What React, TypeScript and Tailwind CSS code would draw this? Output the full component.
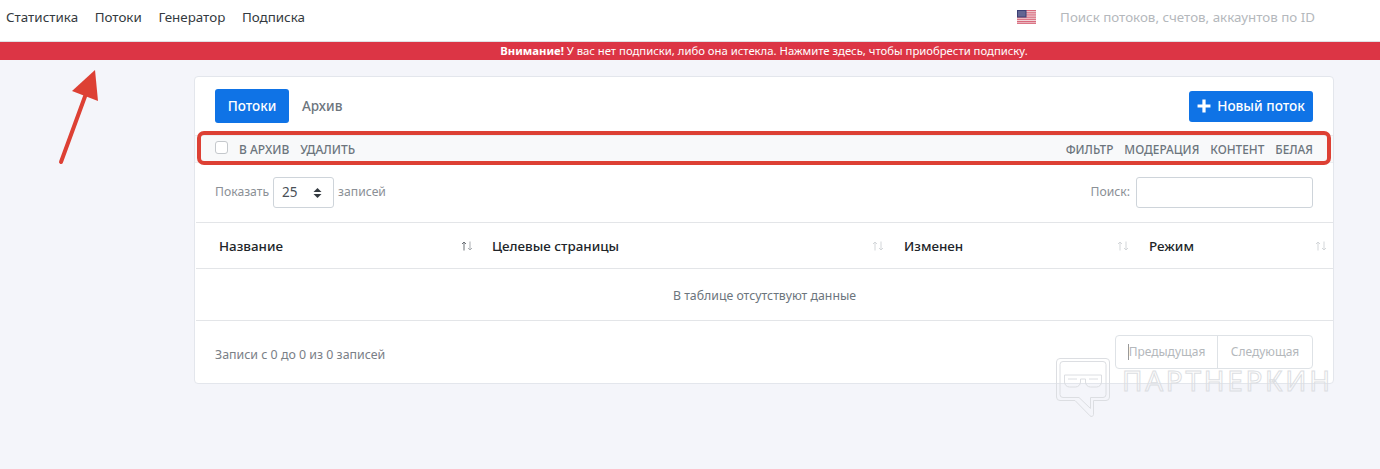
const font = "font-['Noto_Sans','Open_Sans',sans-serif]";

function SortIcon({ up = false }: { up?: boolean }) {
  return (
    <svg width="12" height="10" viewBox="0 0 12 10" className="shrink-0" fill="none" strokeWidth="1">
      <g stroke={up ? "#6b7076" : "#d3d6d9"}>
        <path d="M3 9.500V1M1 3l2-2 2 2" />
      </g>
      <g stroke={up ? "#a9adb1" : "#d3d6d9"}>
        <path d="M9 .5V9M7 7l2 2 2-2" />
      </g>
    </svg>
  );
}

function Flag() {
  return (
    <svg width="19" height="14" viewBox="0 0 19 14" className="shrink-0">
      <rect width="19" height="14" fill="#f5f0f0" />
      {[0, 2.2, 4.3, 6.5, 8.6, 10.8, 12.6].map((y) => (
        <rect key={y} y={y} width="19" height="1.3" fill="#d9697c" />
      ))}
      <rect width="9.5" height="7.5" fill="#3c3f75" />
      <rect x="1" y="1" width="7.5" height="5.5" fill="#7c7fa5" opacity="0.6" />
    </svg>
  );
}

function Head({ title, pr, up }: { title: string; pr: string; up?: boolean }) {
  return (
    <div className={`flex items-center justify-between pl-1 pt-[2px] ${pr}`}>
      <span className="text-[13.4px] font-medium text-[#212529]">{title}</span>
      <SortIcon up={up} />
    </div>
  );
}

export default function App() {
  return (
    <div className={`relative h-[469px] w-[1380px] overflow-hidden bg-[#f4f5fa] ${font}`}>
      <header className="flex h-[42px] items-center justify-between border-b border-[#dfe1e5] bg-white pb-[7px] pl-[6px] pr-[65px]">
        <nav className="flex gap-[16.6px] text-[13.4px] text-[#343a40]">
          <span>Статистика</span>
          <span>Потоки</span>
          <span>Генератор</span>
          <span>Подписка</span>
        </nav>
        <div className="flex items-center gap-6">
          <Flag />
          <span className="text-[13.35px] text-[#b4b8bc]">Поиск потоков, счетов, аккаунтов по ID</span>
        </div>
      </header>

      <div className="flex h-[18px] items-center justify-center bg-[#dc3545] pl-[148px] text-[11.3px] text-white">
        <b className="font-bold">Внимание!</b>&nbsp;У вас нет подписки, либо она истекла. Нажмите здесь, чтобы приобрести подписку.
      </div>

      <main className="ml-[194px] mt-4 h-[308px] w-[1140px] rounded border border-[#e3e6ec] bg-white">
        <div className="flex items-center justify-between pl-5 pr-5 pt-3">
          <div className="flex items-center gap-[13px] text-[13.5px] font-medium">
            <span className="flex h-[34px] w-[74px] items-center justify-center rounded-[3px] bg-[#0f73e6] text-white">Потоки</span>
            <span className="text-[#6c757d]">Архив</span>
          </div>
          <button className="flex h-[31px] w-[124px] items-center justify-center gap-[6px] rounded-[3px] bg-[#0f73e6] text-[13.6px] font-medium text-white">
            <svg width="14" height="14" viewBox="0 0 13 13" fill="#fff">
              <path d="M5 0.5h3V5h4.500v3H8v4.500H5V8H.5V5H5z" />
            </svg>
            Новый поток
          </button>
        </div>

        <div className="mt-3 flex h-[28px] items-center justify-between border-y border-[#eceef1] bg-[#f8f9fa] pl-5 pr-5 pt-[1px] text-xs font-medium text-[#6c757d]">
          <div className="flex items-center">
            <span className="-mt-1 mr-[11px] h-[13px] w-[13px] rounded-[3px] border border-[#c4c8cc] bg-white" />
            <span className="mr-[11px]">В АРХИВ</span>
            <span>УДАЛИТЬ</span>
          </div>
          <div className="flex items-center gap-[11px] text-[11.8px]">
            <span>ФИЛЬТР</span>
            <span>МОДЕРАЦИЯ</span>
            <span>КОНТЕНТ</span>
            <span>БЕЛАЯ</span>
          </div>
        </div>

        <div className="flex h-[59px] items-center justify-between pl-5 pr-5 text-[12.2px] text-[#8b9096]">
          <div className="flex items-center gap-1">
            <span className="-mt-[1px]">Показать</span>
            <span className="flex h-[31px] w-[61px] items-center justify-between rounded-[3px] border border-[#ced4da] pl-2 pr-[11px] text-[13.5px] text-[#495057]">
              25
              <svg width="9" height="12" viewBox="0 0 9 12" fill="#343a40">
                <path d="M4.5 1L8.5 5H.5zM4.5 11L.5 7h8z" />
              </svg>
            </span>
            <span className="-mt-[1px]">записей</span>
          </div>
          <div className="flex items-center gap-[6px]">
            <span>Поиск:</span>
            <span className="h-[31px] w-[177px] rounded-[3px] border border-[#ced4da] bg-white" />
          </div>
        </div>

        <div className="ml-[1px] grid h-[47px] grid-cols-[273px_412px_245px_189px] items-center border-y border-[#e3e5e8] pl-[19px]">
          <Head title="Название" pr="pr-[15px]" up />
          <Head title="Целевые страницы" pr="pr-[16px]" />
          <Head title="Изменен" pr="pr-[16px]" />
          <Head title="Режим" pr="pr-[7px]" />
        </div>

        <div className="ml-[1px] flex h-[52px] items-center justify-center border-b border-[#e3e5e8] pt-[3px] text-[12.3px] text-[#6c757d]">
          В таблице отсутствуют данные
        </div>

        <div className="flex h-[59px] items-center justify-between pl-5 pr-5 pt-[2px] text-[12.4px] text-[#7a8087]">
          <span className="mt-[7px]">Записи с 0 до 0 из 0 записей</span>
          <div className="flex h-[34px] w-[198px] rounded-[4px] border border-[#dee2e6] text-xs text-[#b4b8bc]">
            <span className="flex w-[102px] items-center justify-center border-r border-[#dee2e6]">
              <span className="border-l border-[#999] leading-[16px]">Предыдущая</span>
            </span>
            <span className="flex flex-1 items-center justify-center">Следующая</span>
          </div>
        </div>
      </main>

      {/* Annotation: red frame over the toolbar */}
      <div className="pointer-events-none absolute left-[197px] top-[131px] h-[34px] w-[1134px] rounded-[7px] border-4 border-[#dd4034]" />

      {/* Annotation: arrow */}
      <svg className="pointer-events-none absolute left-[50px] top-[65px]" width="60" height="105" viewBox="0 0 60 105" fill="none">
        <path d="M11 97L37 26" stroke="#dd4034" strokeWidth="4" strokeLinecap="round" />
        <path d="M45 5L48 36L22 26z" fill="#dd4034" />
      </svg>

      {/* Watermark */}
      <div className="pointer-events-none absolute left-[1056px] top-[358px] flex items-start gap-[12px]">
        <svg width="54" height="60" viewBox="0 0 54 60" fill="none" stroke="#dcdee2" strokeWidth="1">
          <path d="M4 .5h46a3.500 3.500 0 0 1 3.500 3.500v35a3.500 3.500 0 0 1-3.500 3.500H37.500v14a2 2 0 0 1-3.500 1.300L19 42.500H4A3.500 3.500 0 0 1 .5 39V4A3.500 3.500 0 0 1 4 .5z" />
          <path d="M7 3.500h40a3 3 0 0 1 3 3v30a3 3 0 0 1-3 3H34.500v11L23 39.500H7a3 3 0 0 1-3-3v-30a3 3 0 0 1 3-3z" />
          <path d="M8.500 17h37M8.500 17v7a5 5 0 0 0 5 5h6a5 5 0 0 0 5-5v-3h5v3a5 5 0 0 0 5 5h6a5 5 0 0 0 5-5v-7M12 21h9M33 21h9" />
        </svg>
        <span
          className="mt-[7px] text-[28px] font-normal leading-[30px] tracking-[2.7px] text-transparent"
          style={{ WebkitTextStroke: "1px #dcdee2" }}
        >
          ПАРТНЕРКИН
        </span>
      </div>
    </div>
  );
}
